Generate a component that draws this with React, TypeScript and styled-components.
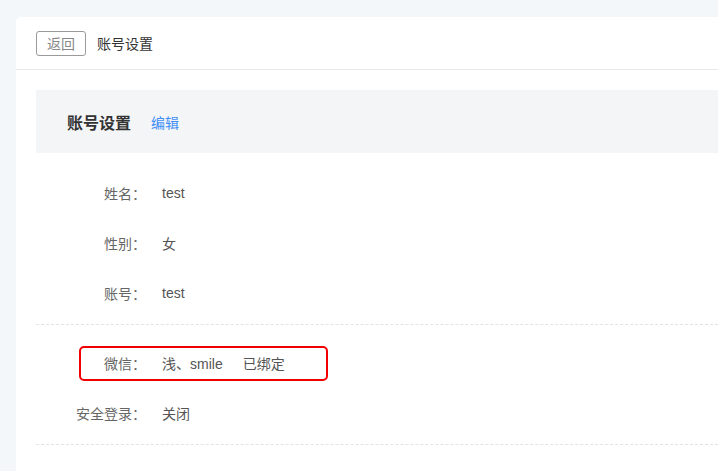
import styled, { createGlobalStyle } from "styled-components";

const GlobalStyle = createGlobalStyle`
  html, body {
    margin: 0;
    padding: 0;
    background-color: #f4f7fa;
    font-family: "Liberation Sans", "Noto Sans CJK SC", sans-serif;
  }
`;

const Page = styled.div`
  padding: 17px 0 0 16px;
  height: 471px;
  box-sizing: border-box;
  overflow: hidden;
`;

const Card = styled.div`
  background-color: #ffffff;
  border-top-left-radius: 5px;
  min-height: 460px;
`;

const Header = styled.div`
  height: 52px;
  padding: 0 20px;
  display: flex;
  align-items: center;
  gap: 11px;
  border-bottom: 1px solid #e9e9e9;
`;

const BackButton = styled.button`
  width: 50px;
  height: 25px;
  padding: 0;
  border: 1px solid #9a9a9a;
  border-radius: 3px;
  background-color: #ffffff;
  color: #888888;
  font-family: inherit;
  font-size: 14px;
  cursor: pointer;
`;

const HeaderTitle = styled.span`
  font-size: 14px;
  color: #333333;
`;

const Content = styled.div`
  padding: 20px 0 0 20px;
`;

const SectionBar = styled.div`
  height: 63px;
  padding-left: 31px;
  display: flex;
  align-items: center;
  gap: 20px;
  background-color: #f4f5f7;
`;

const SectionTitle = styled.h2`
  margin: 0;
  font-size: 16px;
  font-weight: bold;
  color: #333333;
`;

const EditLink = styled.a`
  font-size: 14px;
  color: #3e8ef7;
  cursor: pointer;
`;

const Group = styled.div<{ $top: number }>`
  padding: ${(p) => p.$top}px 0 6px;
  border-bottom: 1px dashed #e3e3e3;
`;

const Row = styled.div<{ $highlight?: boolean }>`
  position: relative;
  height: 50px;
  display: flex;
  align-items: center;
  font-size: 14px;

  ${(p) =>
    p.$highlight &&
    `
    &::after {
      content: "";
      position: absolute;
      left: 43px;
      top: 8px;
      width: 245px;
      height: 31px;
      border: 2px solid #f20000;
      border-radius: 5px;
    }
  `}
`;

const Label = styled.span`
  width: 110px;
  text-align: right;
  color: #666666;
`;

const Value = styled.span`
  margin-left: 16px;
  color: #555555;
`;

const Status = styled.span`
  margin-left: 20px;
  color: #555555;
`;

export default function App() {
  return (
    <>
      <GlobalStyle />
      <Page>
        <Card>
          <Header>
            <BackButton>返回</BackButton>
            <HeaderTitle>账号设置</HeaderTitle>
          </Header>
          <Content>
            <SectionBar>
              <SectionTitle>账号设置</SectionTitle>
              <EditLink>编辑</EditLink>
            </SectionBar>
            <Group $top={15}>
              <Row>
                <Label>姓名：</Label>
                <Value>test</Value>
              </Row>
              <Row>
                <Label>性别：</Label>
                <Value>女</Value>
              </Row>
              <Row>
                <Label>账号：</Label>
                <Value>test</Value>
              </Row>
            </Group>
            <Group $top={13}>
              <Row $highlight>
                <Label>微信：</Label>
                <Value>浅、smile</Value>
                <Status>已绑定</Status>
              </Row>
              <Row>
                <Label>安全登录：</Label>
                <Value>关闭</Value>
              </Row>
            </Group>
          </Content>
        </Card>
      </Page>
    </>
  );
}
